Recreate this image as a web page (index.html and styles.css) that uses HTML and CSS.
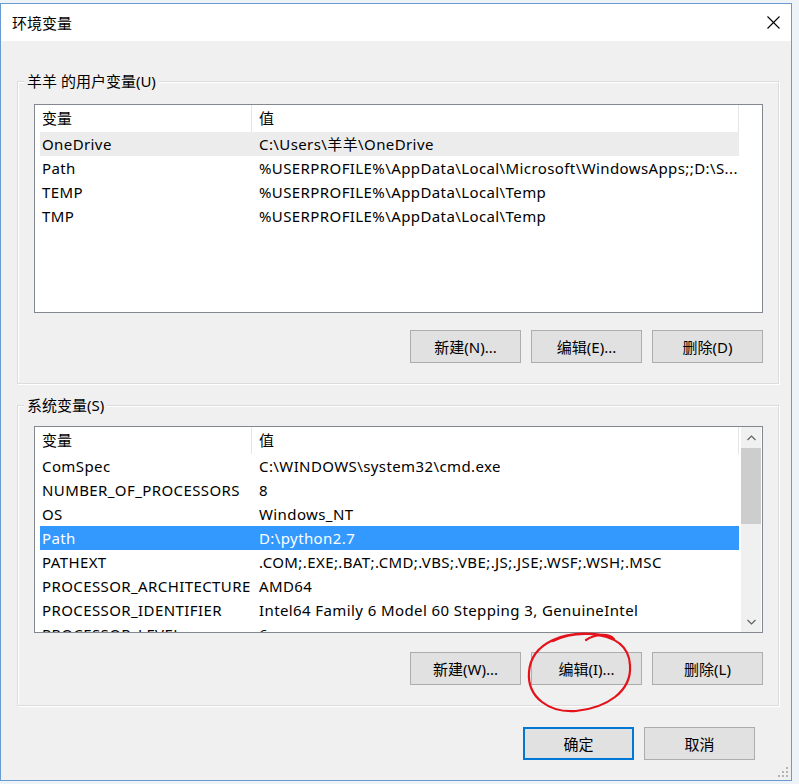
FILE: index.html
```html
<!DOCTYPE html>
<html lang="zh-CN">
<head>
<meta charset="utf-8">
<title>环境变量</title>
<link rel="stylesheet" href="styles.css">
</head>
<body>
<div class="window">
  <div class="titlebar">
    <span class="title">环境变量</span>
    <svg class="close" width="13" height="13" viewBox="0 0 13 13"><path d="M0.5 0.5 L12.5 12.5 M12.5 0.5 L0.5 12.5" stroke="#000" stroke-width="1.1" fill="none"/></svg>
  </div>
  <div class="content">
    <div class="group">
      <div class="legend">羊羊 的用户变量(U)</div>
      <div class="list l-user">
        <div class="list-main">
          <div class="row hdr"><div class="c1">变量</div><div class="c2">值</div></div>
          <div class="row hover"><div class="c1">OneDrive</div><div class="c2">C:\Users\羊羊\OneDrive</div></div>
          <div class="row"><div class="c1">Path</div><div class="c2">%USERPROFILE%\AppData\Local\Microsoft\WindowsApps;;D:\S...</div></div>
          <div class="row"><div class="c1">TEMP</div><div class="c2">%USERPROFILE%\AppData\Local\Temp</div></div>
          <div class="row"><div class="c1">TMP</div><div class="c2">%USERPROFILE%\AppData\Local\Temp</div></div>
        </div>
      </div>
      <div class="btns b-user">
        <button class="btn">新建(N)...</button>
        <button class="btn">编辑(E)...</button>
        <button class="btn">删除(D)</button>
      </div>
    </div>

    <div class="group g-sys">
      <div class="legend">系统变量(S)</div>
      <div class="list l-sys">
        <div class="list-main">
          <div class="row hdr"><div class="c1">变量</div><div class="c2">值</div></div>
          <div class="row"><div class="c1">ComSpec</div><div class="c2">C:\WINDOWS\system32\cmd.exe</div></div>
          <div class="row"><div class="c1">NUMBER_OF_PROCESSORS</div><div class="c2">8</div></div>
          <div class="row"><div class="c1">OS</div><div class="c2">Windows_NT</div></div>
          <div class="row selected"><div class="c1">Path</div><div class="c2">D:\python2.7</div></div>
          <div class="row"><div class="c1">PATHEXT</div><div class="c2">.COM;.EXE;.BAT;.CMD;.VBS;.VBE;.JS;.JSE;.WSF;.WSH;.MSC</div></div>
          <div class="row"><div class="c1">PROCESSOR_ARCHITECTURE</div><div class="c2">AMD64</div></div>
          <div class="row"><div class="c1">PROCESSOR_IDENTIFIER</div><div class="c2">Intel64 Family 6 Model 60 Stepping 3, GenuineIntel</div></div>
          <div class="row"><div class="c1">PROCESSOR_LEVEL</div><div class="c2">6</div></div>
        </div>
        <div class="sb">
          <div class="sb-arrow"><svg width="9" height="6" viewBox="0 0 9 6"><path d="M0.5 5 L4.5 1 L8.5 5" stroke="#606060" stroke-width="1.2" fill="none"/></svg></div>
          <div class="sb-thumb"></div>
          <div class="sb-track"></div>
          <div class="sb-arrow"><svg width="9" height="6" viewBox="0 0 9 6"><path d="M0.5 1 L4.5 5 L8.5 1" stroke="#606060" stroke-width="1.2" fill="none"/></svg></div>
        </div>
      </div>
      <div class="btns b-sys">
        <button class="btn">新建(W)...</button>
        <button class="btn">编辑(I)...</button>
        <button class="btn">删除(L)</button>
      </div>
    </div>

    <div class="footer">
      <button class="btn btn-default">确定</button>
      <button class="btn">取消</button>
    </div>
  </div>

  <svg class="mark" width="120" height="95" viewBox="0 0 120 95">
    <path d="M66 15 C75 9 88 8 94 14" stroke="#e3121b" stroke-width="2.2" fill="none" stroke-linecap="round"/>
    <path d="M92 12 C42 1 11 20 9 47 C7 73 30 88 56 86 C86 83 112 67 110 40 C109 21 95 11 70 9 C55 8 41 12 33 16" stroke="#e3121b" stroke-width="2.2" fill="none" stroke-linecap="round"/>
  </svg>

  <svg class="grip" width="10" height="10" viewBox="0 0 10 10">
    <g fill="#b4b4b4">
      <rect x="8" y="0" width="2" height="2"/>
      <rect x="4" y="4" width="2" height="2"/><rect x="8" y="4" width="2" height="2"/>
      <rect x="0" y="8" width="2" height="2"/><rect x="4" y="8" width="2" height="2"/><rect x="8" y="8" width="2" height="2"/>
    </g>
  </svg>
</div>
</body>
</html>
```

FILE: styles.css
```css
* {
  box-sizing: border-box;
}

html, body {
  margin: 0;
  padding: 0;
}

body {
  width: 799px;
  height: 784px;
  overflow: hidden;
  background: #eef3f8;
  font-family: "Noto Sans", "Noto Sans CJK SC", sans-serif;
  font-size: 15px;
  color: #000;
}

.window {
  position: relative;
  margin-top: 3px;
  width: 792px;
  height: 778px;
  border: 1px solid #6b9ad0;
  background: #f0f0f0;
  display: flex;
  flex-direction: column;
}

.titlebar {
  height: 37px;
  background: #fff;
  display: flex;
  align-items: center;
  justify-content: space-between;
  padding: 0 11px 0 11px;
  flex: none;
}

.title {
  line-height: 20px;
}

.close {
  display: block;
}

.content {
  padding: 40px 12px 0 16px;
}

.group {
  border: 1px solid #dcdcdc;
  box-shadow: 1px 1px 0 #fff, inset 1px 1px 0 #fff;
  padding: 0 15px 20px 16px;
}

.g-sys {
  margin-top: 21px;
}

.legend {
  margin: -11px 0 0 -10px;
  padding: 0 3px;
  width: fit-content;
  height: 20px;
  line-height: 20px;
  background: #f0f0f0;
}

.list {
  border: 1px solid #828790;
  background: #fff;
  display: flex;
  overflow: hidden;
}

.l-user {
  margin-top: 13px;
  height: 209px;
}

.l-sys {
  margin-top: 11px;
  height: 207px;
}

.list-main {
  flex: 1;
  min-width: 0;
  padding-left: 5px;
  overflow: hidden;
}

.row {
  display: grid;
  grid-template-columns: 212px 487px;
  width: 699px;
  height: 24px;
  line-height: 24px;
  white-space: nowrap;
  letter-spacing: 0.4px;
}

.row.hdr {
  height: 27px;
  line-height: 27px;
  letter-spacing: 0;
}

.hdr > div {
  border-right: 1px solid #e5e5e5;
}

.c1 {
  padding-left: 2px;
  overflow: hidden;
}

.c2 {
  padding-left: 7px;
  overflow: visible;
}

.row.hover {
  background: #ececec;
}

.row.selected {
  background: #3399ff;
  color: #fff;
}

.sb {
  width: 20px;
  margin-right: 1px;
  display: flex;
  flex-direction: column;
  background: #f0f0f0;
  flex: none;
}

.sb-arrow {
  height: 21px;
  display: flex;
  align-items: center;
  justify-content: center;
  flex: none;
}

.sb-arrow svg {
  display: block;
}

.sb-thumb {
  height: 76px;
  background: #cdcdcd;
  flex: none;
}

.sb-track {
  flex: 1;
}

.btns {
  display: flex;
  justify-content: flex-end;
  gap: 10px;
}

.b-user {
  margin-top: 17px;
}

.b-sys {
  margin-top: 19px;
}

.btn {
  width: 111px;
  height: 33px;
  border: 1px solid #adadad;
  background: #e1e1e1;
  font-family: "Noto Sans", "Noto Sans CJK SC", sans-serif;
  font-size: 15px;
  color: #000;
  padding: 0;
  margin: 0;
}

.btn-default {
  border: 2px solid #0078d7;
}

.footer {
  display: flex;
  justify-content: flex-end;
  gap: 10px;
  margin-top: 21px;
  padding-right: 24px;
}

.mark {
  position: absolute;
  left: 519px;
  top: 621px;
}

.grip {
  position: absolute;
  right: 3px;
  bottom: 3px;
}
```
